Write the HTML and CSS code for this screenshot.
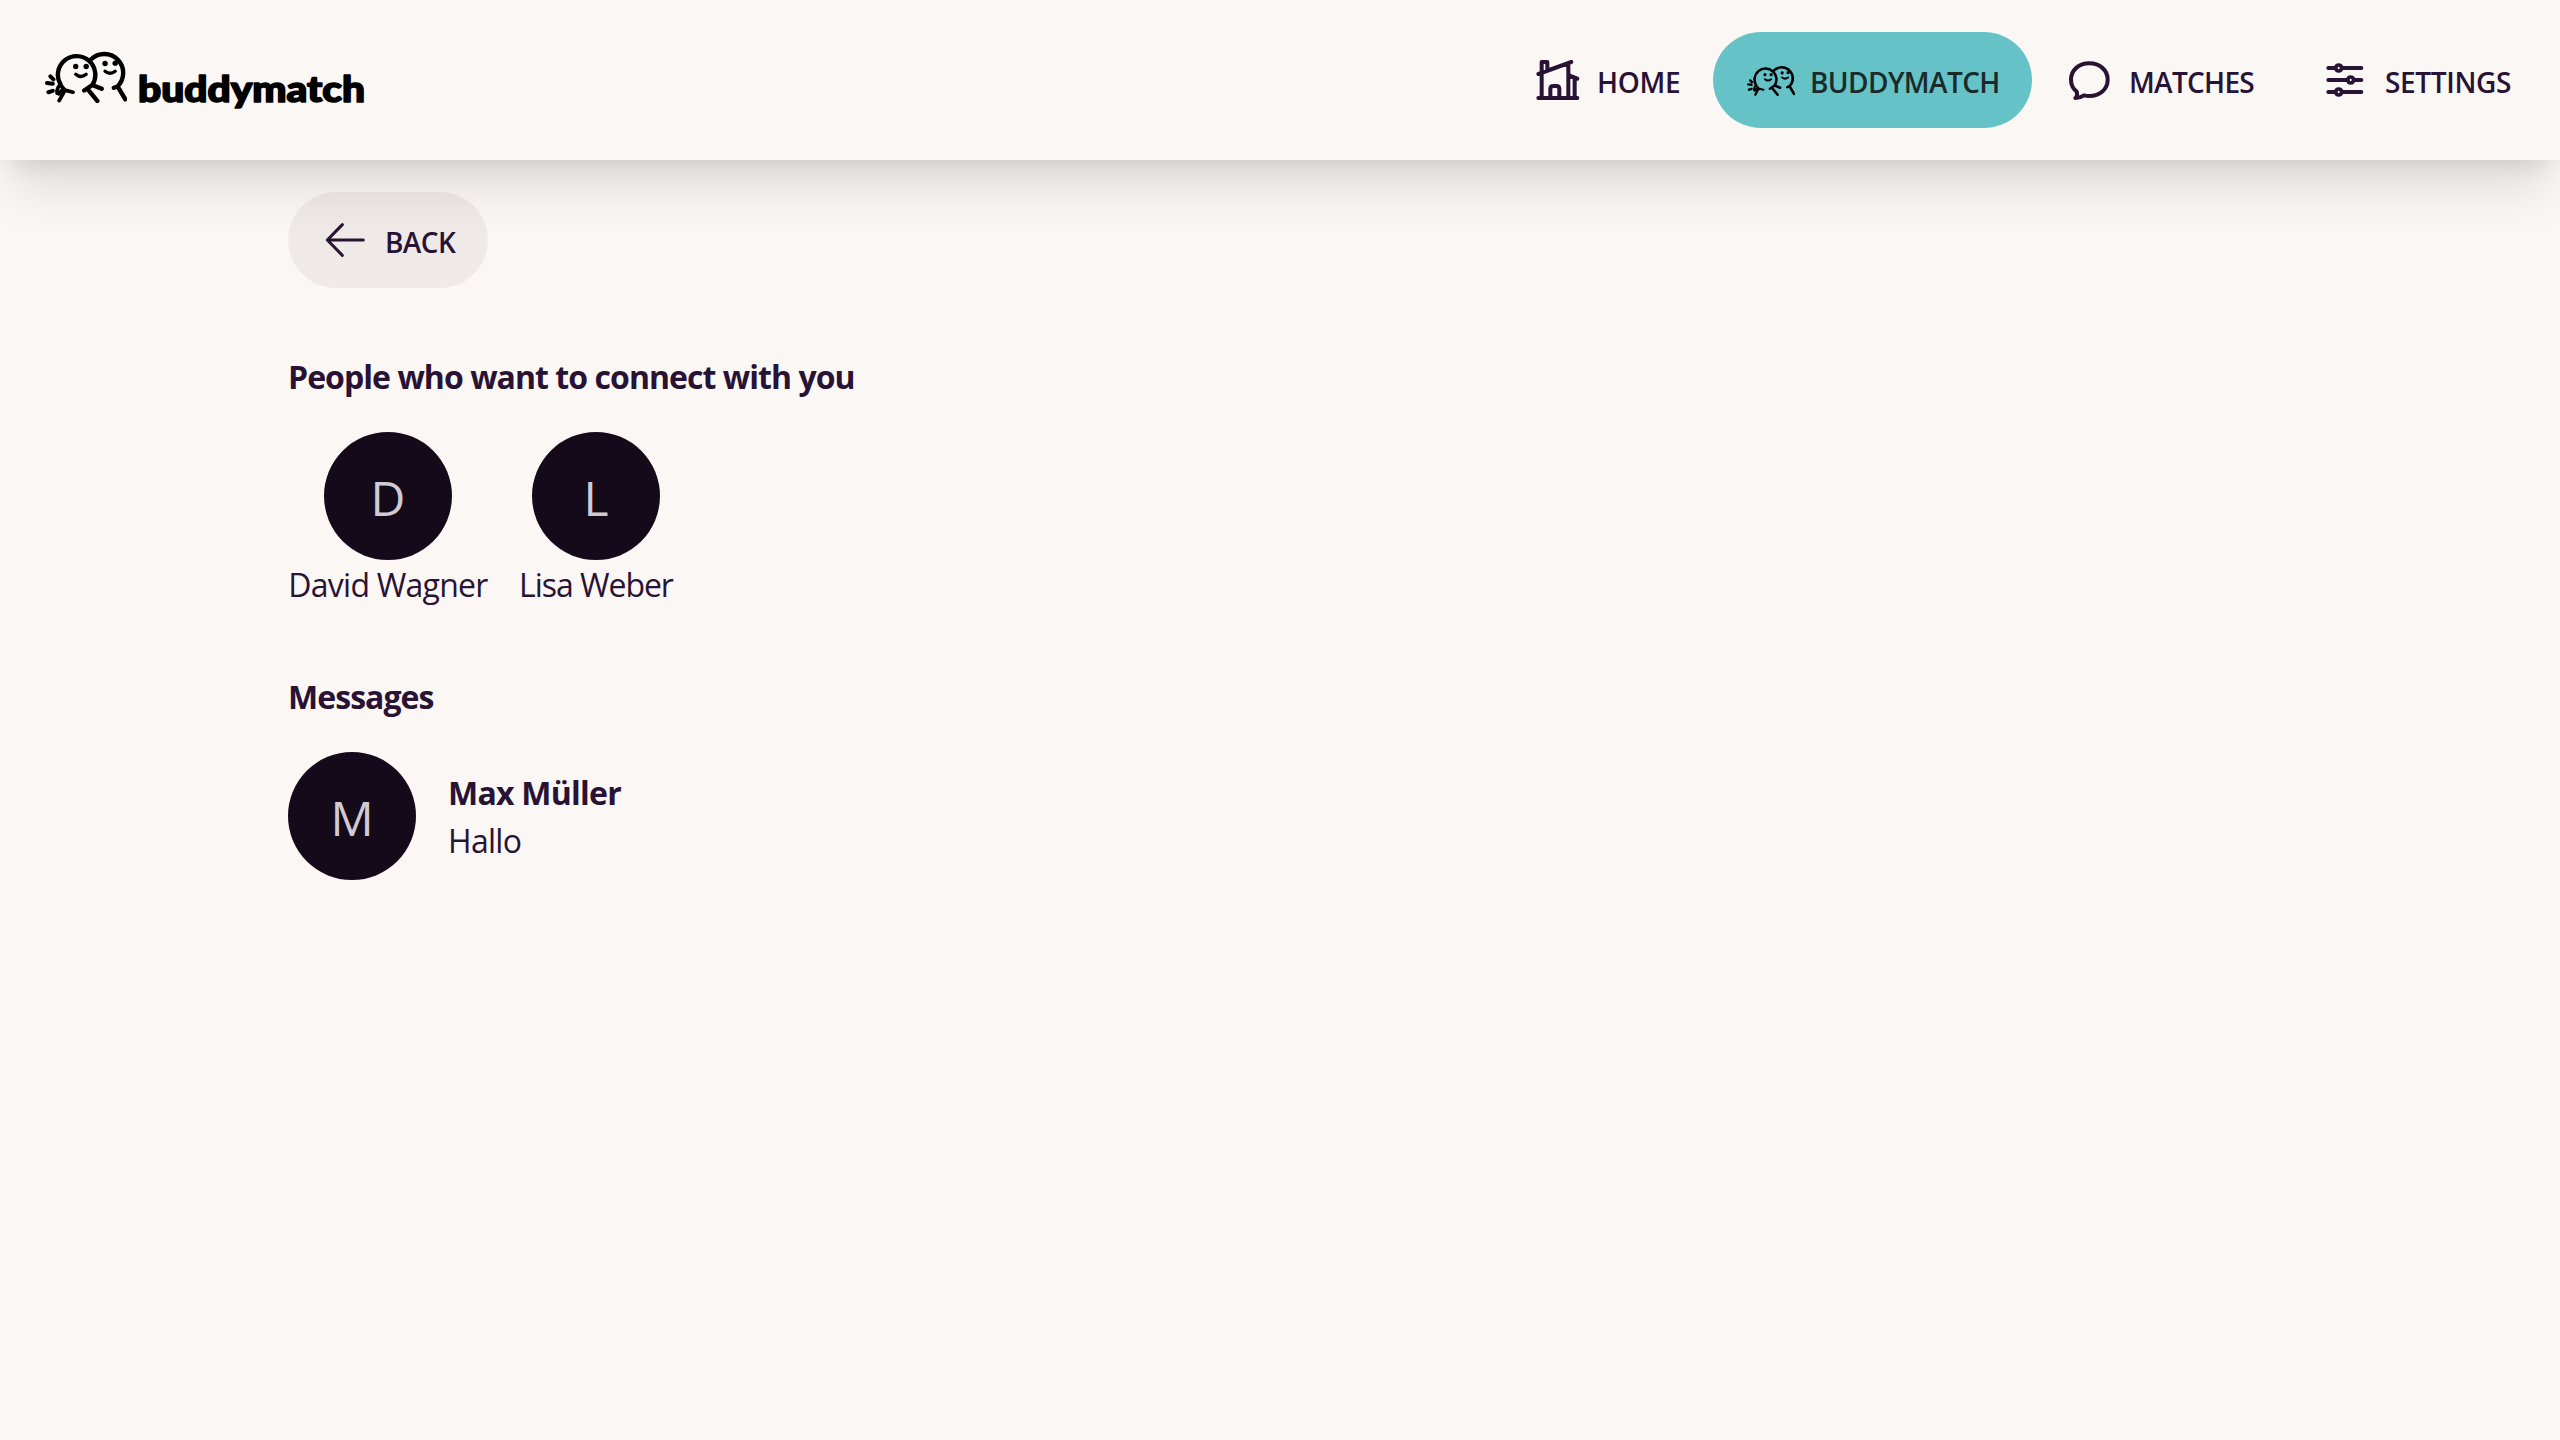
FILE: index.html
```
<!DOCTYPE html>
<html lang="en">
<head>
<meta charset="utf-8">
<title>buddymatch</title>
<link rel="stylesheet" href="styles.css">
</head>
<body>
<svg class="sprite" aria-hidden="true">
  <symbol id="buddies" viewBox="46 62 243 157">
    <g fill="none" stroke="currentColor" stroke-width="13" stroke-linecap="round" stroke-linejoin="round">
      <path d="M182 90A55.5 55.5 0 1 1 261 170L250 174M262 171L284 208"/>
      <path d="M92 164A55.5 55.5 0 1 1 186 166L162 182M176 182L201 213M190 167L214 177"/>
      <path stroke-width="11" d="M91 164Q80 176 82 190M96 170L105 181L129 187M104 184L88 212M96 181L87 192"/>
      <path stroke-width="12" d="M62 140L71 149M52 160L69 162M56 187L69 183"/>
      <path stroke-width="10" d="M137 134Q152 147 168 134M224 125Q239 137 254 125"/>
    </g>
    <g fill="currentColor"><circle cx="137" cy="111" r="8"/><circle cx="168" cy="111" r="8"/><circle cx="224" cy="102" r="8"/><circle cx="254" cy="101" r="8"/></g>
  </symbol>
</svg>
<header class="navbar">
  <a class="logo">
    <svg class="logo-mark"><use href="#buddies"/></svg>
    <svg class="logo-name" viewBox="0 0 236 48"><text x="4" y="32.5" textLength="227" lengthAdjust="spacingAndGlyphs">buddymatch</text></svg>
  </a>
  <nav class="menu">
    <a class="btn home">
      <svg class="icon" viewBox="44 48 144 144"><path d="M57 174H174M67 100V174M57 102L156 66M67 98V66H84V90M147 72V174M149 106L174 116M166 114V174M93 174V148Q93 138 102 138H111Q120 138 120 148V174"/></svg>
      <span>HOME</span>
    </a>
    <a class="btn active buddy">
      <svg class="icon buddy-icon"><use href="#buddies"/></svg>
      <span>BUDDYMATCH</span>
    </a>
    <a class="btn matches">
      <svg class="icon" viewBox="48 48 144 144"><path d="M76 174Q84 168 80 155C69 146 63 134 63 119C63 90 87 70 118 70S173 90 173 119S149 168 118 168Q110 168 102 166Q90 174 76 174Z"/></svg>
      <span>MATCHES</span>
    </a>
    <a class="btn settings">
      <svg class="icon" viewBox="818 48 144 144"><path d="M837 84H859M877 84H936M837 120H895M913 120H936M837 156H859M877 156H936"/><g class="knobs"><circle cx="868" cy="84" r="9"/><circle cx="904" cy="120" r="9"/><circle cx="868" cy="156" r="9"/></g></svg>
      <span>SETTINGS</span>
    </a>
  </nav>
</header>
<main class="page">
  <a class="btn back">
    <svg class="icon" viewBox="157 108 144 144"><path class="thin" d="M281 180H173M218 134L173 180L218 226"/></svg>
    <span>BACK</span>
  </a>
  <section>
    <h2>People who want to connect with you</h2>
    <div class="people">
      <div class="person david"><div class="avatar"><span>D</span></div><p class="name-david">David Wagner</p></div>
      <div class="person lisa"><div class="avatar"><span>L</span></div><p class="name-lisa">Lisa Weber</p></div>
    </div>
  </section>
  <section>
    <h2>Messages</h2>
    <div class="message">
      <div class="avatar"><span>M</span></div>
      <div><p class="sender">Max Müller</p><p class="preview">Hallo</p></div>
    </div>
  </section>
</main>
</body>
</html>
```
FILE: styles.css
```
* { box-sizing: border-box; margin: 0; }
html { background: #faf7f5; }
body {
  min-height: 1440px;
  background: #faf7f5;
  color: #291334;
  font: 400 32px/48px "Open Sans", sans-serif;
  overflow: hidden;
}
.sprite { display: none; }

.navbar {
  position: relative;
  height: 160px;
  padding: 0 16px 0 45px;
  display: flex;
  align-items: center;
  justify-content: space-between;
  background: #faf7f5;
  box-shadow: 0 40px 50px -10px rgb(0 0 0 / .1), 0 16px 20px -12px rgb(0 0 0 / .1);
}
.logo { display: flex; align-items: flex-start; height: 60px; color: #000; }
.logo-mark { width: 82px; height: 53px; margin-top: -.5px; }
.logo-name { width: 236px; height: 48px; margin: 18.5px 0 0 7px; overflow: visible; }
.logo-name text {
  font: 900 36px Lato, sans-serif;
  stroke: #000;
  stroke-width: 1.6px;
  stroke-linejoin: round;
}

.menu { display: flex; }
.btn {
  height: 96px;
  padding: 0 0 0 34px;
  display: flex;
  align-items: center;
  gap: 15px;
  border-radius: 48px;
  font-size: 28px;
  font-weight: 550;
  white-space: nowrap;
}
.btn span { padding-top: 3px; }
.home { width: 213px; letter-spacing: -.3px; }
.buddy { width: 319px; letter-spacing: -.6px; }
.matches { width: 256px; letter-spacing: -.7px; }
.settings { width: 256px; letter-spacing: -.35px; }
.active { background: #65c3c8; color: #1a2b2c; }
.icon {
  width: 48px;
  height: 48px;
  flex: none;
  fill: none;
  stroke: currentColor;
  stroke-width: 12;
  stroke-linecap: round;
  stroke-linejoin: round;
}
.buddy-icon { height: 31px; color: #000; stroke: none; }
.knobs { stroke-width: 11; }
.thin { stroke-width: 9; }

.page { padding: 32px 288px; }
.back { width: 200px; background: rgb(190 178 168 / .19); letter-spacing: -.6px; }
section { margin-top: 64px; }
h2, p { padding-top: 1px; height: 48px; }
h2 { font-size: 32px; font-weight: 680; letter-spacing: -.95px; margin-bottom: 32px; }
.people { display: flex; gap: 32px; }
.person { display: flex; flex-direction: column; align-items: center; white-space: nowrap; }
.david { width: 200px; }
.lisa { width: 152px; }
.name-david { letter-spacing: -.75px; }
.name-lisa { letter-spacing: -1.05px; }
.avatar {
  width: 128px;
  height: 128px;
  display: flex;
  align-items: center;
  justify-content: center;
  border-radius: 50%;
  background: #150a1a;
  color: #d0cad3;
  font-size: 48px;
}
.avatar span { padding-top: 3px; }
.message { display: flex; align-items: center; gap: 32px; }
.sender { font-weight: 680; letter-spacing: -.75px; }
.preview { letter-spacing: -.7px; }
```
